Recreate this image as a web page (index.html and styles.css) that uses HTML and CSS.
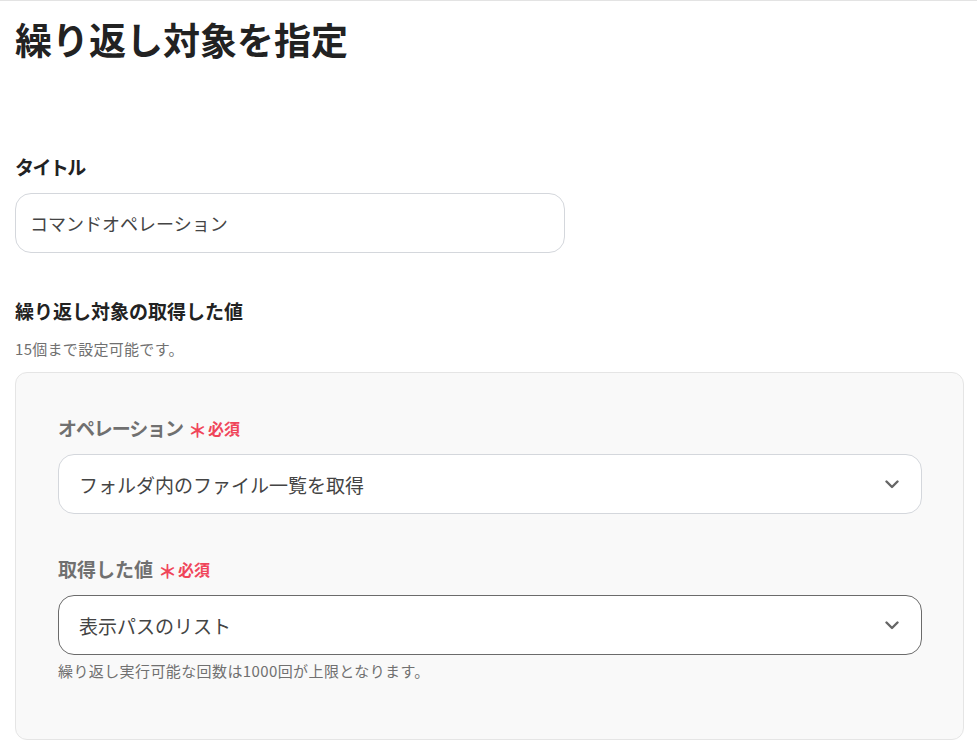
FILE: index.html
```html
<!DOCTYPE html>
<html lang="ja">
<head>
    <meta charset="UTF-8">
    <meta name="viewport" content="width=device-width, initial-scale=1.0">
    <title>繰り返し対象を指定</title>
    <link rel="stylesheet" href="styles.css">
</head>
<body>
    <div class="page">
        <h1>繰り返し対象を指定</h1>

        <div class="field field-title">
            <label class="field-label kana">タイトル</label>
            <div class="text-input">コマンドオペレーション</div>
        </div>

        <div class="field field-target">
            <label class="field-label">繰り返し対象の取得した値</label>
            <div class="field-note">15個まで設定可能です。</div>

            <div class="target-box">
                <div class="sub-field">
                    <div class="sub-label"><span class="kana">オペレーション</span><span class="required"><span class="asterisk">＊</span>必須</span></div>
                    <div class="select">
                        <span>フォルダ内のファイル一覧を取得</span>
                        <svg class="chevron" width="14" height="9" viewBox="0 0 14 9"><path d="M1.5 1.5 7 7l5.5-5.5" fill="none" stroke="#666" stroke-width="2.4" stroke-linecap="round" stroke-linejoin="round"/></svg>
                    </div>
                </div>

                <div class="sub-field second">
                    <div class="sub-label">取得した値<span class="required"><span class="asterisk">＊</span>必須</span></div>
                    <div class="select active">
                        <span>表示パスのリスト</span>
                        <svg class="chevron" width="14" height="9" viewBox="0 0 14 9"><path d="M1.5 1.5 7 7l5.5-5.5" fill="none" stroke="#666" stroke-width="2.4" stroke-linecap="round" stroke-linejoin="round"/></svg>
                    </div>
                    <div class="help">繰り返し実行可能な回数は1000回が上限となります。</div>
                </div>
            </div>
        </div>
    </div>
</body>
</html>
```

FILE: styles.css
```css
body {
    margin: 0;
    border-top: 1px solid #e3e3e3;
    font-family: "Noto Sans CJK JP", "Noto Sans", sans-serif;
    color: #222;
    background: #fff;
}

.page {
    padding: 0 13px 0 15px;
}

h1 {
    margin: 13px 0 0;
    font-size: 37px;
    line-height: 50px;
    font-weight: 700;
    color: #222;
}

.field-label {
    display: block;
    font-size: 19px;
    line-height: 26px;
    font-weight: 700;
    color: #222;
}

.field-title {
    margin-top: 90px;
}

.field-title .field-label {
    margin-bottom: 13px;
}

.field-label.kana {
    letter-spacing: -1.6px;
}

.text-input {
    box-sizing: border-box;
    width: 550px;
    height: 60px;
    border: 1px solid #d4d7dc;
    border-radius: 16px;
    padding: 0 14px;
    display: flex;
    align-items: center;
    font-size: 18px;
    color: #444;
}

.field-target {
    margin-top: 45px;
}

.field-note {
    margin-top: 15px;
    font-size: 15px;
    line-height: 20px;
    letter-spacing: 0.3px;
    color: #707070;
}

.target-box {
    margin-top: 13px;
    background: #f9f9f9;
    border: 1px solid #e5e5e5;
    border-radius: 12px;
    padding: 42px 41px 58px 42px;
}

.sub-label {
    font-size: 19px;
    line-height: 26px;
    font-weight: 700;
    color: #707070;
    display: flex;
    align-items: center;
}

.sub-label .kana {
    letter-spacing: -1.1px;
}

.required {
    color: #f0455a;
    font-size: 16px;
    margin-left: 5px;
    display: flex;
    align-items: center;
}

.asterisk {
    font-size: 19px;
    margin-right: 1px;
    position: relative;
    top: 2px;
}

.select {
    box-sizing: border-box;
    height: 60px;
    margin-top: 13px;
    background: #fff;
    border: 1px solid #d4d7dc;
    border-radius: 16px;
    padding: 0 22px 0 20px;
    display: flex;
    align-items: center;
    justify-content: space-between;
    font-size: 19px;
    color: #444;
}

.select.active {
    border-color: #6b6b6b;
}

.sub-field.second {
    margin-top: 42px;
}

.help {
    margin-top: 6px;
    font-size: 15px;
    line-height: 20px;
    letter-spacing: 0.4px;
    color: #707070;
}
```
